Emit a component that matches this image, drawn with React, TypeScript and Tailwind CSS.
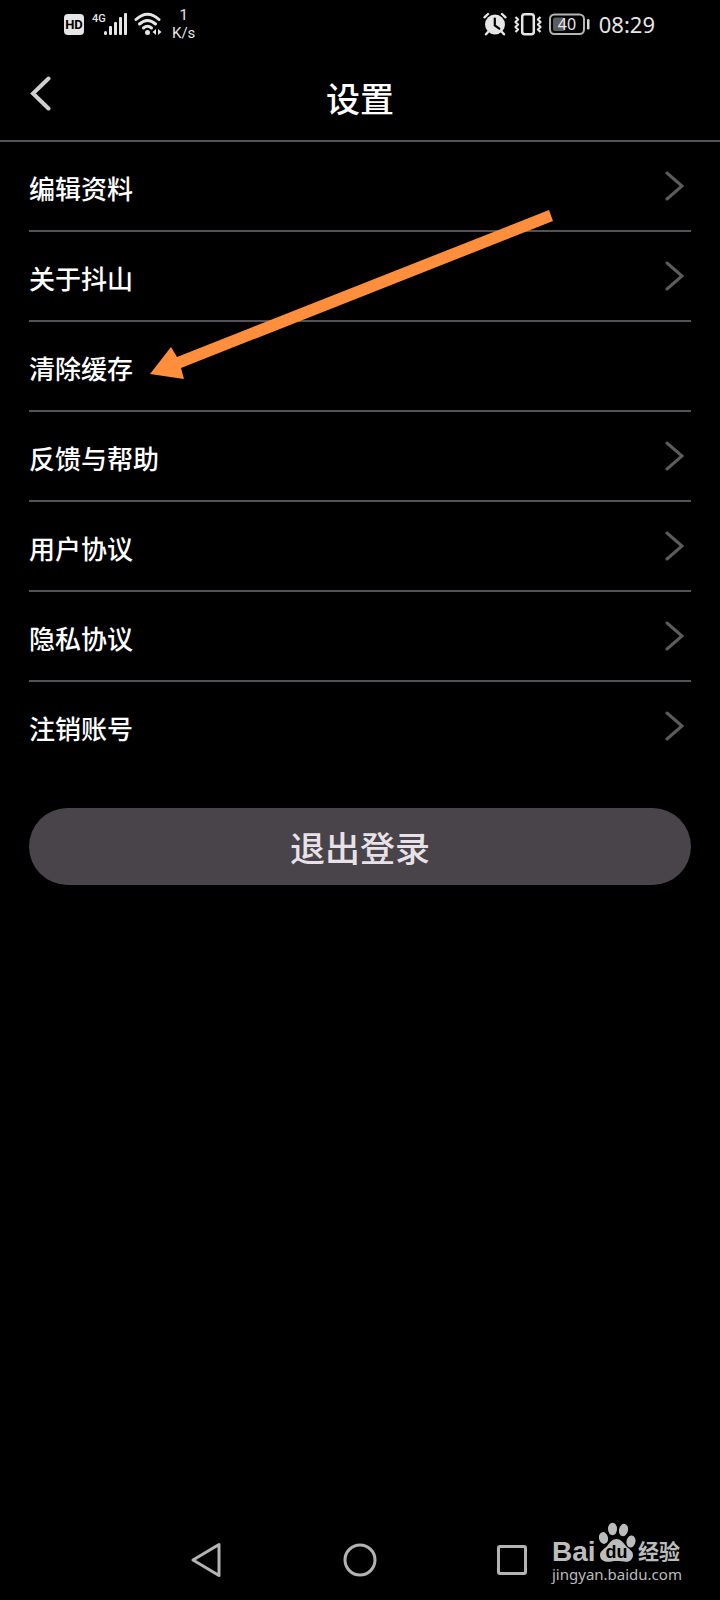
interface SettingItem {
  id: string;
  label: string;
  hasArrow: boolean;
}

const SETTINGS: SettingItem[] = [
  { id: 'profile', label: '编辑资料', hasArrow: true },
  { id: 'about', label: '关于抖山', hasArrow: true },
  { id: 'cache', label: '清除缓存', hasArrow: false },
  { id: 'feedback', label: '反馈与帮助', hasArrow: true },
  { id: 'terms', label: '用户协议', hasArrow: true },
  { id: 'privacy', label: '隐私协议', hasArrow: true },
  { id: 'close-account', label: '注销账号', hasArrow: true },
];

function SignalIcons() {
  return (
    <svg width="98" height="32" viewBox="0 -4 98 32" aria-hidden="true">
      <rect x="0" y="2" width="20" height="21" rx="4" fill="#e6e6e6" />
      <text x="10" y="17" textAnchor="middle" fontSize="13" fontWeight="700" fill="#000" className="font-['Roboto',sans-serif]">
        HD
      </text>
      <text x="28" y="10" fontSize="11" fontWeight="500" fill="#e6e6e6" className="font-['Roboto',sans-serif]">
        4G
      </text>
      <g fill="#e6e6e6">
        <rect x="40" y="19" width="3" height="4" rx="1.5" />
        <rect x="45" y="14" width="3" height="9" rx="1" />
        <rect x="50" y="10" width="3" height="13" rx="1" />
        <rect x="55" y="5" width="3" height="18" rx="1" />
        <rect x="60" y="1" width="3" height="22" rx="1" />
      </g>
      <g fill="none" stroke="#e6e6e6" strokeWidth="3" strokeLinecap="round">
        <path d="M72 7.5Q83.500 -3 95 7.500" />
        <path d="M75.500 12Q83.500 5 91.500 12" />
        <path d="M79.500 16Q83.500 12.500 87.500 16" />
      </g>
      <circle cx="83.500" cy="20.500" r="2.500" fill="#e6e6e6" />
      <path d="M92 17v6l-3.500-3zM94 17v6l3.500-3z" fill="#e6e6e6" />
    </svg>
  );
}

function AlarmIcon() {
  return (
    <svg width="24" height="24" viewBox="0 0 24 24" aria-hidden="true">
      <circle cx="12" cy="12.5" r="10" fill="#e6e6e6" />
      <g fill="none" stroke="#e6e6e6" strokeWidth="2.4" strokeLinecap="round">
        <path d="M1.500 5.300L5 2M22.500 5.300L19 2M5 20l-2 2.300M19 20l2 2.300" />
      </g>
      <path d="M11.800 6.500v7l4.500 3.200" fill="none" stroke="#000" strokeWidth="2.2" strokeLinecap="round" />
    </svg>
  );
}

function VibrateIcon() {
  return (
    <svg width="28" height="24" viewBox="0 0 28 24" aria-hidden="true">
      <g fill="none" stroke="#e6e6e6" strokeLinejoin="round">
        <rect x="8.2" y="2.2" width="11.6" height="20" rx="2.5" strokeWidth="2.5" />
        <path d="M1.500 5l2.500 2.500-2.500 2.500 2.500 2.500-2.500 2.500 2.500 2.500-2.500 2.500" strokeWidth="2.2" />
        <path d="M26.500 5l-2.500 2.500 2.500 2.500-2.500 2.500 2.500 2.500-2.500 2.500 2.500 2.500" strokeWidth="2.2" />
      </g>
    </svg>
  );
}

function BatteryIcon() {
  return (
    <svg width="42" height="24" viewBox="0 0 42 24" aria-hidden="true">
      <rect x="1" y="2.5" width="34" height="19.5" rx="4.5" fill="none" stroke="#b5b5b5" strokeWidth="2" />
      <rect x="4" y="5.5" width="12" height="13.5" rx="2" fill="#5c5c5c" />
      <rect x="38" y="7" width="2.5" height="10.5" rx="1.2" fill="#d8d8d8" />
      <text x="18" y="18" textAnchor="middle" fontSize="16" fill="#e6e6e6" className="font-['Noto_Sans',sans-serif]">
        40
      </text>
    </svg>
  );
}

function StatusBar() {
  return (
    <div className="flex h-12 items-center justify-between pr-[65px] pl-16 text-[#e6e6e6]">
      <div className="flex items-center gap-[10px]">
        <SignalIcons />
        <div className="text-center font-['Roboto',sans-serif] text-[15px] leading-[18px]">
          <div>1</div>
          <div>K/s</div>
        </div>
      </div>
      <div className="flex items-center gap-[7px]">
        <AlarmIcon />
        <VibrateIcon />
        <BatteryIcon />
        <span className="pl-px font-['Noto_Sans',sans-serif] text-[22px] leading-6">08:29</span>
      </div>
    </div>
  );
}

function SettingRow({ item }: { item: SettingItem }) {
  return (
    <li className="border-b-2 border-[#555257] last:border-b-0">
      <button type="button" className="flex h-[88px] w-full items-center justify-between pr-[6px] text-left">
        <span className="pt-1 text-[26px] leading-8 font-medium text-white">{item.label}</span>
        {item.hasArrow && (
          <svg width="20" height="32" viewBox="0 0 20 32" aria-hidden="true">
            <path d="M2 3l15 13L2 29" fill="none" stroke="#5c5c5c" strokeWidth="3" strokeLinecap="round" />
          </svg>
        )}
      </button>
    </li>
  );
}

function NavBar() {
  return (
    <nav className="mt-auto flex h-20 items-center justify-center gap-[120px] pr-0.5">
      <button type="button" aria-label="返回">
        <svg width="32" height="36" viewBox="0 0 32 36" fill="none" stroke="#b4b4b4" strokeWidth="3" strokeLinejoin="round">
          <path d="M28 2.500v31L2 18z" />
        </svg>
      </button>
      <button type="button" aria-label="主页">
        <svg width="34" height="34" viewBox="0 0 34 34" fill="none" stroke="#b4b4b4" strokeWidth="3">
          <circle cx="17" cy="17" r="15" />
        </svg>
      </button>
      <button type="button" aria-label="最近任务">
        <svg width="30" height="30" viewBox="0 0 30 30" fill="none" stroke="#b4b4b4" strokeWidth="3">
          <rect x="1.5" y="1.5" width="27" height="27" rx="1.5" />
        </svg>
      </button>
    </nav>
  );
}

function Watermark() {
  return (
    <div className="absolute right-10 bottom-4 w-32 text-[#bcbcbc]">
      <div className="flex h-[42px] items-end justify-between pb-0.5">
        <span className="font-['Liberation_Sans',sans-serif] text-[28px] leading-5 font-bold">Bai</span>
        <svg width="38" height="40" viewBox="0 0 38 40" aria-hidden="true">
          <g fill="#bcbcbc">
            <ellipse cx="5.5" cy="16" rx="4.500" ry="6" transform="rotate(-12 5.5 16)" />
            <ellipse cx="14.5" cy="7" rx="4.500" ry="6.200" />
            <ellipse cx="25.5" cy="8" rx="4.500" ry="6.200" transform="rotate(12 25.5 8)" />
            <ellipse cx="33" cy="19.500" rx="4.500" ry="6" transform="rotate(10 33 19.5)" />
            <path d="M18.500 17c4 0 6.500 3 9 6.500 3 3.500 7.500 5 7.500 9.500 0 4-3 7-7 6.800-3-.2-6-.8-9.500-.8s-6 .8-9 .8c-4 0-7.500-2.300-7.500-6.800 0-4.500 5-6 7.500-9.500 2.300-3.200 5-6.500 9-6.500z" />
          </g>
          <text x="18.500" y="36" textAnchor="middle" fontSize="18" fontWeight="700" fill="#000" className="font-['Liberation_Sans',sans-serif]">
            du
          </text>
        </svg>
        <span className="text-[21px] leading-6 font-bold">经验</span>
      </div>
      <div className="font-['Noto_Sans',sans-serif] text-[15px] leading-5 whitespace-nowrap">jingyan.baidu.com</div>
    </div>
  );
}

export default function App() {
  return (
    <div className="relative flex min-h-screen flex-col bg-black font-['Noto_Sans_CJK_SC',sans-serif]">
      <StatusBar />

      <header className="grid h-[94px] grid-cols-[1fr_auto_1fr] items-center border-b-2 border-[#555257] px-7">
        <button type="button" aria-label="返回" className="justify-self-start">
          <svg width="26" height="36" viewBox="0 0 26 36" aria-hidden="true">
            <path d="M20.500 2.500L5 17.500l15.500 15" fill="none" stroke="#cfcfcf" strokeWidth="4" strokeLinecap="round" />
          </svg>
        </button>
        <h1 className="pt-2 text-[34px] leading-10 font-medium text-white">设置</h1>
      </header>

      <main className="px-[29px]">
        <ul>
          {SETTINGS.map((item) => (
            <SettingRow key={item.id} item={item} />
          ))}
        </ul>
        <button
          type="button"
          className="mt-[38px] h-[77px] w-full rounded-full bg-[#49434a] text-[35px] leading-10 font-medium text-[#e8e2e8]"
        >
          退出登录
        </button>
      </main>

      {/* pointer to the cache row */}
      <svg className="pointer-events-none absolute top-[208px] left-[148px]" width="408" height="174" viewBox="0 0 408 174" aria-hidden="true">
        <path d="M2 166L23 139l6 10L401 2l4 11L33 160l3 11z" fill="#ff8f3c" />
      </svg>

      <NavBar />
      <Watermark />
    </div>
  );
}
